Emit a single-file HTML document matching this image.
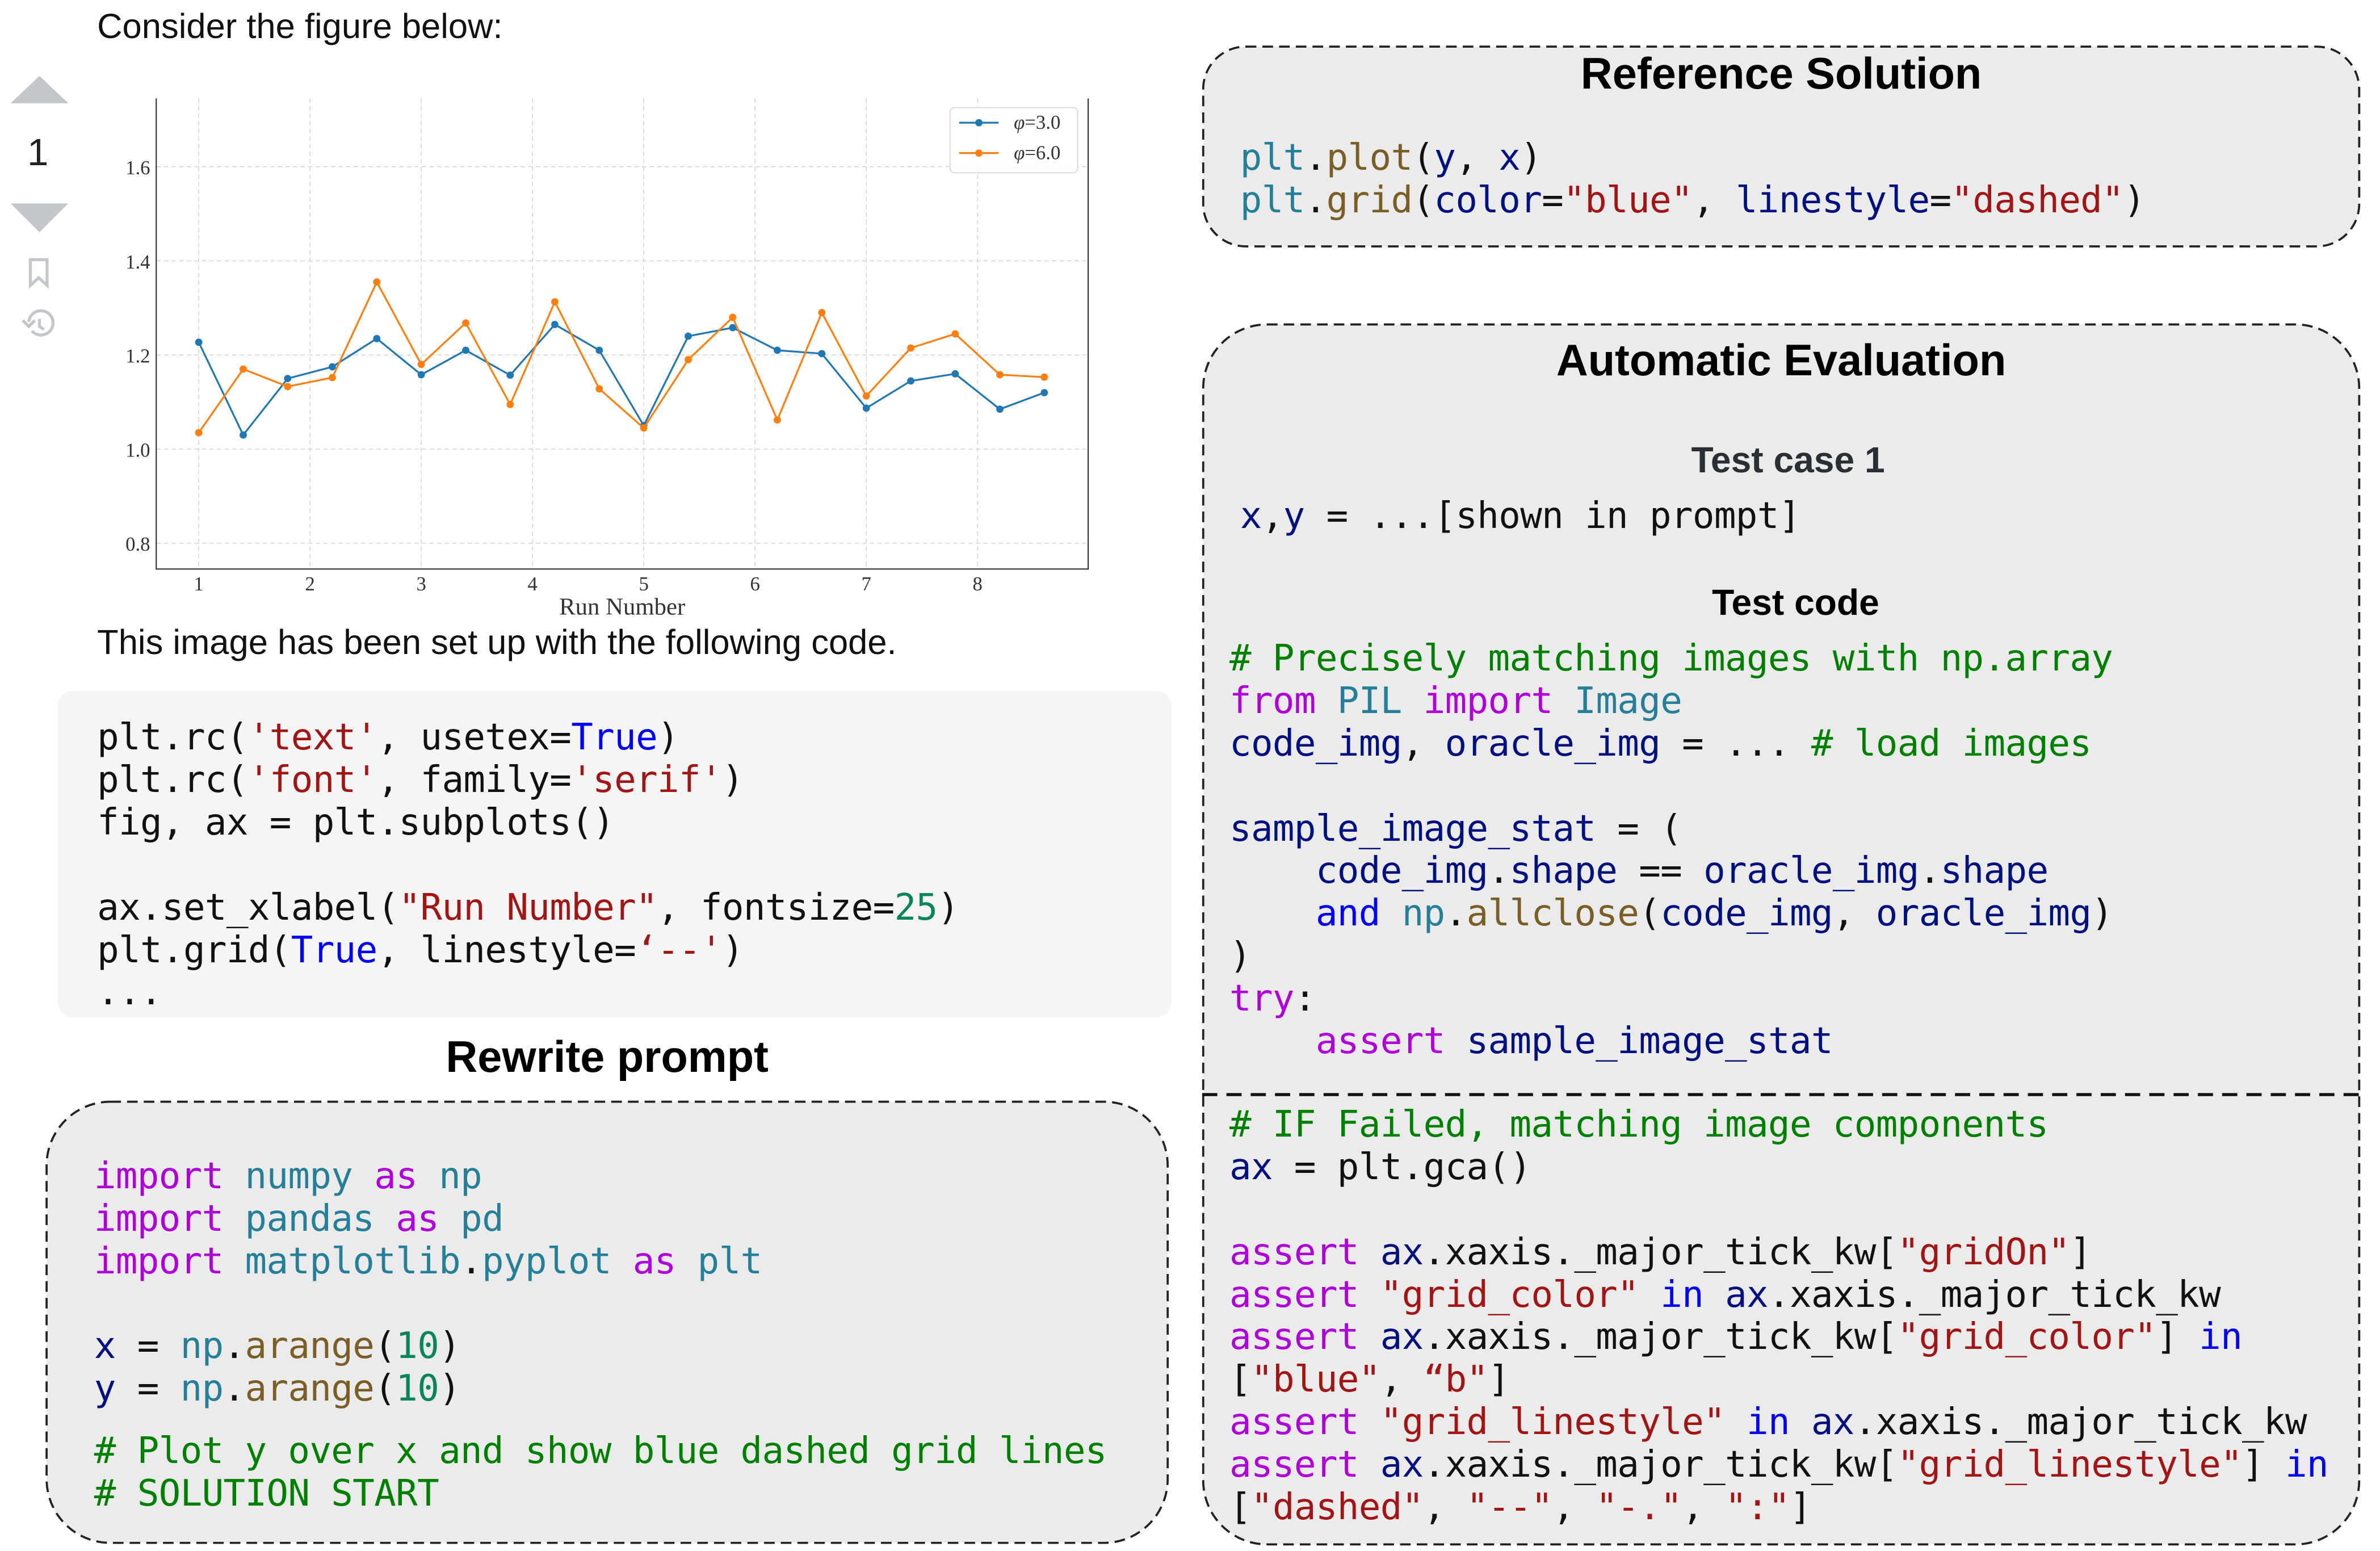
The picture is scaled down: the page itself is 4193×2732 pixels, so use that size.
<!DOCTYPE html>
<html><head><meta charset="utf-8"><style>
html,body{margin:0;padding:0;background:#fff;width:4193px;height:2732px;overflow:hidden}
#w{zoom:2.6741;position:relative;width:1568px;height:1022px}
.a{position:absolute;white-space:pre}
.t{font-family:"Liberation Sans",sans-serif;color:#111}
.c{font-family:"DejaVu Sans Mono",monospace;font-size:24px;letter-spacing:-0.25px;line-height:28px;color:#111}
.h{font-family:"Liberation Sans",sans-serif;font-weight:bold;color:#000;text-align:center}
.g{color:#008000}.k{color:#af00db}.m{color:#267f99}.n{color:#001080}.f{color:#795e26}.s{color:#a31515}.d{color:#098658}.b{color:#0000ff}
</style></head><body><div id="w">
<svg class="a" style="left:0;top:0" width="1568" height="1022">
<g fill="#ebebeb" stroke="#222" stroke-width="1.4" stroke-dasharray="7,4">
<rect x="30.7" y="725.7" width="738.6" height="290.6" rx="42"/>
<rect x="792.7" y="30.7" width="761.6" height="131.6" rx="28"/>
<rect x="792.7" y="213.7" width="761.6" height="803.6" rx="42"/>
</g>
<line x1="792" x2="1555" y1="721" y2="721" stroke="#111" stroke-width="2" stroke-dasharray="10,6"/>
</svg>
<div class="a t" style="left:64px;top:4px;font-size:23px">Consider the figure below:</div>
<svg class="a" style="left:0;top:40px" width="52" height="200">
<polygon points="7,28 26,10 45,28" fill="#c3c7cb"/>
<polygon points="7,94 45,94 26,113" fill="#c3c7cb"/>
<path d="M20,131 h11 v17 l-5.5,-5 l-5.5,5z" fill="none" stroke="#c3c7cb" stroke-width="2"/>
<path d="M19,172 a8,8 0 1 1 2,6" fill="none" stroke="#c3c7cb" stroke-width="2"/>
<path d="M15,171 l4,4 l4,-4" fill="none" stroke="#c3c7cb" stroke-width="2"/>
<path d="M26,170 v5 l3,2" fill="none" stroke="#c3c7cb" stroke-width="2"/>
</svg>
<div class="a t" style="left:18px;top:86px;font-size:25px;color:#222">1</div>
<svg class="a" style="left:70px;top:60px" width="660" height="355" viewBox="70 60 660 355">
<defs>
<marker id="mb" markerWidth="6" markerHeight="6" refX="3" refY="3" markerUnits="userSpaceOnUse"><circle cx="3" cy="3" r="2.4" fill="#1f77b4"/></marker>
<marker id="mo" markerWidth="6" markerHeight="6" refX="3" refY="3" markerUnits="userSpaceOnUse"><circle cx="3" cy="3" r="2.4" fill="#ff7f0e"/></marker>
</defs>
<g stroke="#cfcfcf" stroke-width="0.5" stroke-dasharray="3,2">
<line x1="103" x2="717" y1="110" y2="110"/><line x1="103" x2="717" y1="172" y2="172"/><line x1="103" x2="717" y1="234" y2="234"/><line x1="103" x2="717" y1="296" y2="296"/><line x1="103" x2="717" y1="358" y2="358"/>
<line x1="131" x2="131" y1="65" y2="375"/><line x1="204.3" x2="204.3" y1="65" y2="375"/><line x1="277.6" x2="277.6" y1="65" y2="375"/><line x1="350.9" x2="350.9" y1="65" y2="375"/><line x1="424.2" x2="424.2" y1="65" y2="375"/><line x1="497.5" x2="497.5" y1="65" y2="375"/><line x1="570.8" x2="570.8" y1="65" y2="375"/><line x1="644.1" x2="644.1" y1="65" y2="375"/>
</g>
<path d="M103,65 V375 H717 V65" fill="none" stroke="#333" stroke-width="0.8"/>
<polyline fill="none" stroke="#1f77b4" stroke-width="1.2" marker-start="url(#mb)" marker-mid="url(#mb)" marker-end="url(#mb)" points="131,225.6 160.3,286.7 189.6,249.5 219,241.8 248.3,223.2 277.6,247 306.9,230.9 336.2,247.3 365.6,213.9 394.9,230.9 424.2,280.5 453.5,221.6 482.8,216 512.2,230.9 541.5,233.1 570.8,269 600.1,251.1 629.4,246.4 658.8,269.7 688.1,258.8"/>
<polyline fill="none" stroke="#ff7f0e" stroke-width="1.2" marker-start="url(#mo)" marker-mid="url(#mo)" marker-end="url(#mo)" points="131,285.2 160.3,243.3 189.6,254.8 219,248.9 248.3,185.9 277.6,240.2 306.9,212.9 336.2,266.6 365.6,199 394.9,256.3 424.2,282.1 453.5,237.1 482.8,209.2 512.2,276.8 541.5,206.1 570.8,261 600.1,229.4 629.4,220.1 658.8,247 688.1,248.6"/>
<rect x="626" y="71" width="84" height="43" rx="3" fill="#fff" fill-opacity="0.85" stroke="#ddd" stroke-width="0.8"/>
<line x1="632" x2="658" y1="81" y2="81" stroke="#1f77b4" stroke-width="1.2"/><circle cx="645" cy="81" r="2.4" fill="#1f77b4"/>
<line x1="632" x2="658" y1="101" y2="101" stroke="#ff7f0e" stroke-width="1.2"/><circle cx="645" cy="101" r="2.4" fill="#ff7f0e"/>
<g font-family="Liberation Serif,serif" font-size="13" fill="#333">
<text x="668" y="85" font-style="italic">φ<tspan font-style="normal">=3.0</tspan></text>
<text x="668" y="105" font-style="italic">φ<tspan font-style="normal">=6.0</tspan></text>
<g text-anchor="end"><text x="99" y="115">1.6</text><text x="99" y="177">1.4</text><text x="99" y="239">1.2</text><text x="99" y="301">1.0</text><text x="99" y="363">0.8</text></g>
<g text-anchor="middle"><text x="131" y="389">1</text><text x="204.3" y="389">2</text><text x="277.6" y="389">3</text><text x="350.9" y="389">4</text><text x="424.2" y="389">5</text><text x="497.5" y="389">6</text><text x="570.8" y="389">7</text><text x="644.1" y="389">8</text>
<text x="410" y="405" font-size="16">Run Number</text></g>
</g>
</svg>
<div class="a t" style="left:64px;top:410px;font-size:23px">This image has been set up with the following code.</div>
<div class="a" style="left:38px;top:455px;width:734px;height:215px;background:#f5f5f5;border-radius:10px"></div>
<div class="a c" style="left:64px;top:472px">plt.rc(<span class="s">'text'</span>, usetex=<span class="b">True</span>)
plt.rc(<span class="s">'font'</span>, family=<span class="s">'serif'</span>)
fig, ax = plt.subplots()

ax.set_xlabel(<span class="s">"Run Number"</span>, fontsize=<span class="d">25</span>)
plt.grid(<span class="b">True</span>, linestyle=<span class="s">‘--'</span>)
...</div>
<div class="a h" style="left:200px;width:400px;top:680px;font-size:29px">Rewrite prompt</div>
<div class="a c" style="left:62px;top:761px"><span class="k">import</span> <span class="m">numpy</span> <span class="k">as</span> <span class="m">np</span>
<span class="k">import</span> <span class="m">pandas</span> <span class="k">as</span> <span class="m">pd</span>
<span class="k">import</span> <span class="m">matplotlib</span>.<span class="m">pyplot</span> <span class="k">as</span> <span class="m">plt</span>

<span class="n">x</span> = <span class="m">np</span>.<span class="f">arange</span>(<span class="d">10</span>)
<span class="n">y</span> = <span class="m">np</span>.<span class="f">arange</span>(<span class="d">10</span>)</div>
<div class="a c g" style="left:62px;top:942px"># Plot y over x and show blue dashed grid lines
# SOLUTION START</div>
<div class="a h" style="left:792px;width:763px;top:32px;font-size:29px">Reference Solution</div>
<div class="a c" style="left:817px;top:90px"><span class="m">plt</span>.<span class="f">plot</span>(<span class="n">y</span>, <span class="n">x</span>)
<span class="m">plt</span>.<span class="f">grid</span>(<span class="n">color</span>=<span class="s">"blue"</span>, <span class="n">linestyle</span>=<span class="s">"dashed"</span>)</div>
<div class="a h" style="left:792px;width:763px;top:221px;font-size:29px">Automatic Evaluation</div>
<div class="a h" style="left:1078px;width:200px;top:289px;font-size:24px;color:#2a2e35">Test case 1</div>
<div class="a c" style="left:817px;top:326px"><span class="n">x</span>,<span class="n">y</span> = ...[shown in prompt]</div>
<div class="a h" style="left:1083px;width:200px;top:383px;font-size:24px">Test code</div>
<div class="a c" style="left:810px;top:420px"><span class="g"># Precisely matching images with np.array</span>
<span class="k">from</span> <span class="m">PIL</span> <span class="k">import</span> <span class="m">Image</span>
<span class="n">code_img</span>, <span class="n">oracle_img</span> = ... <span class="g"># load images</span>

<span class="n">sample_image_stat</span> = (
    <span class="n">code_img</span>.<span class="n">shape</span> == <span class="n">oracle_img</span>.<span class="n">shape</span>
    <span class="b">and</span> <span class="m">np</span>.<span class="f">allclose</span>(<span class="n">code_img</span>, <span class="n">oracle_img</span>)
)
<span class="k">try</span>:
    <span class="k">assert</span> <span class="n">sample_image_stat</span></div>
<div class="a c" style="left:810px;top:727px"><span class="g"># IF Failed, matching image components</span>
<span class="n">ax</span> = plt.gca()

<span class="k">assert</span> <span class="n">ax</span>.xaxis._major_tick_kw[<span class="s">"gridOn"</span>]
<span class="k">assert</span> <span class="s">"grid_color"</span> <span class="b">in</span> <span class="n">ax</span>.xaxis._major_tick_kw
<span class="k">assert</span> <span class="n">ax</span>.xaxis._major_tick_kw[<span class="s">"grid_color"</span>] <span class="b">in</span>
[<span class="s">"blue"</span>, <span class="s">“b"</span>]
<span class="k">assert</span> <span class="s">"grid_linestyle"</span> <span class="b">in</span> <span class="n">ax</span>.xaxis._major_tick_kw
<span class="k">assert</span> <span class="n">ax</span>.xaxis._major_tick_kw[<span class="s">"grid_linestyle"</span>] <span class="b">in</span>
[<span class="s">"dashed"</span>, <span class="s">"--"</span>, <span class="s">"-."</span>, <span class="s">":"</span>]</div>
</div></body></html>
